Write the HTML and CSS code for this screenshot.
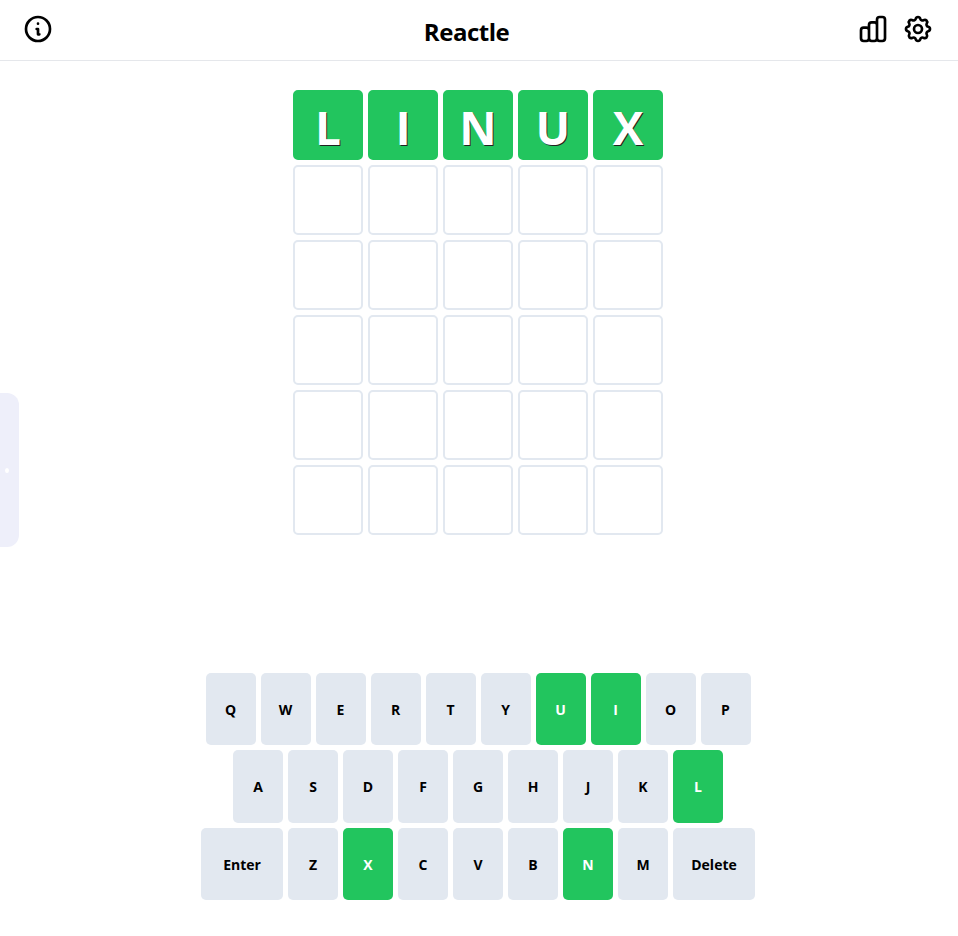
FILE: index.html
```html
<!DOCTYPE html>
<html lang="en">
<head>
    <meta charset="UTF-8">
    <meta name="viewport" content="width=device-width, initial-scale=1.0">
    <title>Reactle</title>
    <link rel="stylesheet" href="styles.css">
</head>
<body>
    <!-- Top bar -->
    <header class="navbar">
        <div class="navbar-left">
            <svg class="icon" viewBox="0 0 24 24"><path d="M13 16h-1v-4h-1m1-4h.01M21 12a9 9 0 11-18 0 9 9 0 0118 0z"/></svg>
        </div>
        <h1 class="title">Reactle</h1>
        <div class="navbar-right">
            <svg class="icon" viewBox="0 0 24 24"><path d="M9 19v-6a2 2 0 00-2-2H5a2 2 0 00-2 2v6a2 2 0 002 2h2a2 2 0 002-2zm0 0V9a2 2 0 012-2h2a2 2 0 012 2v10m-6 0a2 2 0 002 2h2a2 2 0 002-2m0 0V5a2 2 0 012-2h2a2 2 0 012 2v14a2 2 0 01-2 2h-2a2 2 0 01-2-2z"/></svg>
            <svg class="icon" viewBox="0 0 24 24"><path d="M10.325 4.317c.426-1.756 2.924-1.756 3.35 0a1.724 1.724 0 002.573 1.066c1.543-.94 3.31.826 2.37 2.37a1.724 1.724 0 001.065 2.572c1.756.426 1.756 2.924 0 3.35a1.724 1.724 0 00-1.066 2.573c.94 1.543-.826 3.31-2.37 2.37a1.724 1.724 0 00-2.572 1.065c-.426 1.756-2.924 1.756-3.35 0a1.724 1.724 0 00-2.573-1.066c-1.543.94-3.31-.826-2.37-2.37a1.724 1.724 0 00-1.065-2.572c-1.756-.426-1.756-2.924 0-3.35a1.724 1.724 0 001.066-2.573c-.94-1.543.826-3.31 2.37-2.37.996.608 2.296.07 2.572-1.065z"/><path d="M15 12a3 3 0 11-6 0 3 3 0 016 0z"/></svg>
        </div>
    </header>

    <!-- Side tab -->
    <div class="side-tab"><span class="side-dot"></span></div>

    <!-- Guess grid -->
    <main class="grid">
        <div class="cell solved">L</div>
        <div class="cell solved">I</div>
        <div class="cell solved">N</div>
        <div class="cell solved">U</div>
        <div class="cell solved">X</div>
        <div class="cell"></div><div class="cell"></div><div class="cell"></div><div class="cell"></div><div class="cell"></div>
        <div class="cell"></div><div class="cell"></div><div class="cell"></div><div class="cell"></div><div class="cell"></div>
        <div class="cell"></div><div class="cell"></div><div class="cell"></div><div class="cell"></div><div class="cell"></div>
        <div class="cell"></div><div class="cell"></div><div class="cell"></div><div class="cell"></div><div class="cell"></div>
        <div class="cell"></div><div class="cell"></div><div class="cell"></div><div class="cell"></div><div class="cell"></div>
    </main>

    <!-- Keyboard -->
    <section class="keyboard">
        <div class="key-row">
            <button class="key">Q</button>
            <button class="key">W</button>
            <button class="key">E</button>
            <button class="key">R</button>
            <button class="key">T</button>
            <button class="key">Y</button>
            <button class="key correct">U</button>
            <button class="key correct">I</button>
            <button class="key">O</button>
            <button class="key">P</button>
        </div>
        <div class="key-row">
            <button class="key">A</button>
            <button class="key">S</button>
            <button class="key">D</button>
            <button class="key">F</button>
            <button class="key">G</button>
            <button class="key">H</button>
            <button class="key">J</button>
            <button class="key">K</button>
            <button class="key correct">L</button>
        </div>
        <div class="key-row">
            <button class="key wide">Enter</button>
            <button class="key">Z</button>
            <button class="key correct">X</button>
            <button class="key">C</button>
            <button class="key">V</button>
            <button class="key">B</button>
            <button class="key correct">N</button>
            <button class="key">M</button>
            <button class="key wide">Delete</button>
        </div>
    </section>
</body>
</html>
```

FILE: styles.css
```css
body {
    font-family: "Open Sans", "Noto Sans", sans-serif;
    margin: 0;
    background-color: white;
    color: black;
}
.navbar {
    display: flex;
    align-items: center;
    justify-content: space-between;
    height: 60px;
    padding: 0 24px 0 22px;
    border-bottom: 1px solid #e5e7eb;
}
.navbar-left {
    width: 54px;
    display: flex;
}
.navbar-right {
    display: flex;
    gap: 13px;
}
.icon {
    width: 32px;
    height: 32px;
    margin-top: -2px;
    fill: none;
    stroke: black;
    stroke-width: 2;
    stroke-linecap: round;
    stroke-linejoin: round;
}
.title {
    margin: 4px 0 0;
    font-size: 24px;
    line-height: 32px;
    font-weight: 700;
    letter-spacing: -0.5px;
}
.side-tab {
    position: absolute;
    left: 0;
    top: 393px;
    width: 19px;
    height: 154px;
    background-color: #eeeffa;
    border-radius: 0 12px 12px 0;
}
.side-dot {
    position: absolute;
    left: 5px;
    top: 75px;
    width: 4px;
    height: 5px;
    border-radius: 50%;
    background-color: white;
}
.grid {
    display: grid;
    grid-template-columns: repeat(5, 70px);
    grid-auto-rows: 70px;
    gap: 5px;
    justify-content: center;
    padding: 29px 2px 0 0;
}
.cell {
    display: flex;
    align-items: center;
    justify-content: center;
    box-sizing: border-box;
    border: 2px solid #e2e8f0;
    border-radius: 5px;
    font-size: 46px;
    font-weight: 700;
}
.solved {
    padding-top: 4px;
    background-color: #22c55e;
    border-color: #22c55e;
    color: white;
    text-shadow: 1px 1px 0 #222;
}
.keyboard {
    display: flex;
    flex-direction: column;
    gap: 5px;
    margin-top: 138px;
    padding-right: 2px;
}
.key-row {
    display: flex;
    justify-content: center;
    gap: 5px;
}
.key {
    width: 50px;
    height: 72.4px;
    padding: 0.5px 0 0;
    border: none;
    border-radius: 5px;
    background-color: #e2e8f0;
    color: black;
    font-family: inherit;
    font-size: 14px;
    font-weight: 700;
    cursor: pointer;
}
.wide {
    width: 82px;
}
.correct {
    background-color: #22c55e;
    color: white;
}
```
